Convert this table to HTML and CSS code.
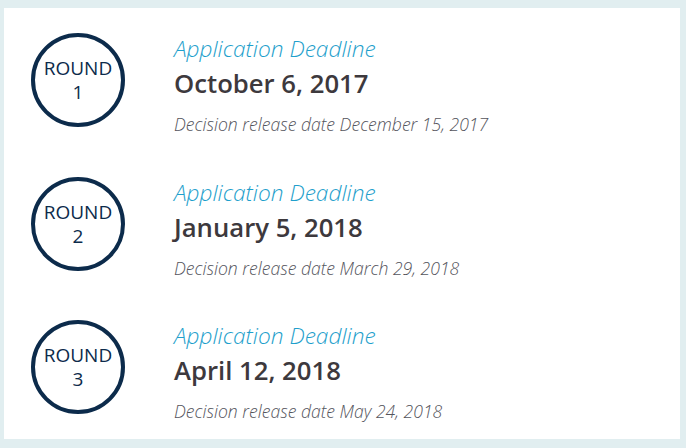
FILE: index.html
```html
<!DOCTYPE html>
<html>
<head>
<meta charset="utf-8">
<link rel="stylesheet" href="styles.css">
</head>
<body>
<div class="card">
  <div class="row">
    <div class="badge"><span>ROUND</span><span>1</span></div>
    <div class="info">
      <div class="label">Application Deadline</div>
      <div class="date">October 6, 2017</div>
      <div class="note">Decision release date December 15, 2017</div>
    </div>
  </div>
  <div class="row">
    <div class="badge"><span>ROUND</span><span>2</span></div>
    <div class="info">
      <div class="label">Application Deadline</div>
      <div class="date">January 5, 2018</div>
      <div class="note">Decision release date March 29, 2018</div>
    </div>
  </div>
  <div class="row">
    <div class="badge"><span>ROUND</span><span>3</span></div>
    <div class="info">
      <div class="label">Application Deadline</div>
      <div class="date">April 12, 2018</div>
      <div class="note">Decision release date May 24, 2018</div>
    </div>
  </div>
</div>
</body>
</html>
```
FILE: styles.css
```css
html, body {
  margin: 0;
  padding: 0;
}
body {
  background: #e1eef0;
  font-family: "Open Sans", "Liberation Sans", sans-serif;
  padding: 8px 6px 9px 4px;
  height: 448px;
  box-sizing: border-box;
}
.card {
  background: #ffffff;
  height: 431px;
  display: flex;
  flex-direction: column;
}
.row {
  height: 144px;
  display: flex;
  align-items: flex-start;
  padding: 25px 0 0 27px;
  box-sizing: border-box;
}
.badge {
  width: 94px;
  height: 94px;
  box-sizing: border-box;
  border: 4px solid #0c2b4b;
  border-radius: 50%;
  display: flex;
  flex-direction: column;
  align-items: center;
  justify-content: center;
  color: #0c2b4b;
  font-size: 19px;
  line-height: 24px;
  flex-shrink: 0;
}
.info {
  margin-left: 49px;
  margin-top: 1px;
}
.label {
  font-size: 22.7px;
  font-weight: 300;
  font-style: italic;
  color: #1f9fcc;
  line-height: 30px;
}
.date {
  margin-top: 2px;
  font-size: 25.7px;
  font-weight: 600;
  color: #3d393d;
  line-height: 35px;
}
.note {
  margin-top: 11px;
  font-size: 17.6px;
  font-weight: 300;
  font-style: italic;
  color: #55555d;
  line-height: 25px;
}
```
